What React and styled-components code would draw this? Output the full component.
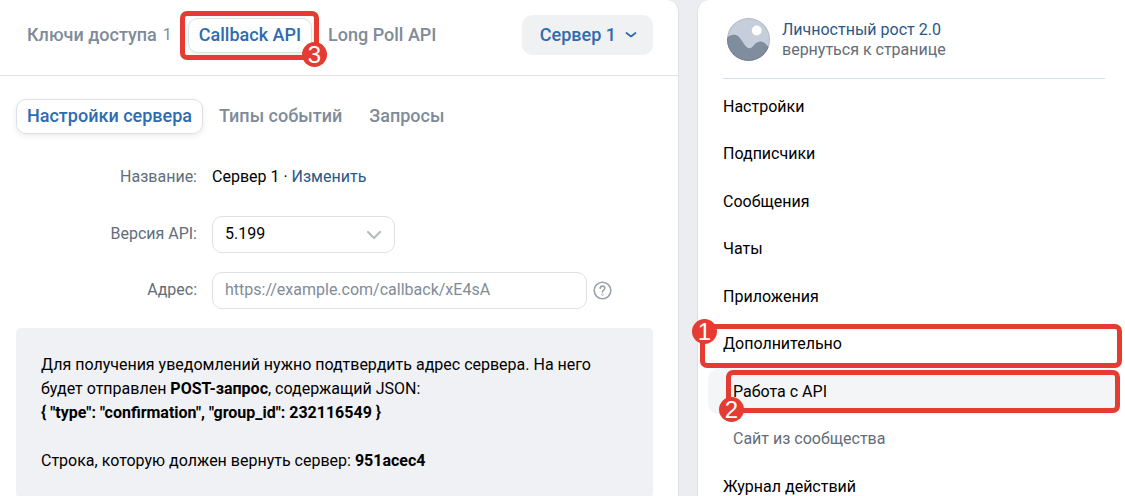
import React from 'react';
import styled, { createGlobalStyle } from 'styled-components';

const GlobalStyle = createGlobalStyle`
  * {
    box-sizing: border-box;
  }

  html {
    scrollbar-width: none;
  }

  body {
    margin: 0;
    background-color: #ebedf0;
    color: #000;
    font-family: Roboto, 'Liberation Sans', sans-serif;
    font-size: 16px;
    line-height: 20px;
  }

  button, input, select {
    font: inherit;
  }

  a {
    color: #2a5885;
    text-decoration: none;
  }
`;

// Two columns: the settings panel and the community menu
const Page = styled.div`
  display: grid;
  grid-template-columns: minmax(0, 1fr) 428px;
  gap: 18px;
  min-height: 100vh;
`;

const Panel = styled.main`
  background-color: #fff;
  border-right: 1px solid #dce1e6;
  border-top-right-radius: 12px;
`;

const PanelHeader = styled.header`
  display: flex;
  align-items: center;
  justify-content: space-between;
  padding: 15px 25px 20px 16px;
  border-bottom: 1px solid #dce1e6;
`;

const PanelBody = styled.div`
  padding: 23px 25px 0 16px;
`;

const Tabs = styled.nav`
  display: flex;
  align-items: center;
  gap: 5px;
`;

// Keeps the red highlight next to the element it surrounds
const Marked = styled.div`
  position: relative;
`;

const Tab = styled.button`
  display: flex;
  align-items: center;
  gap: 6px;
  height: 35px;
  padding: 0 10px 1px;
  border: 1px solid ${(props) => (props.$active ? '#dce1e6' : 'transparent')};
  border-radius: 10px;
  background-color: #fff;
  box-shadow: ${(props) => (props.$active ? '0 2px 6px rgba(0, 0, 0, 0.08)' : 'none')};
  color: ${(props) => (props.$active ? '#2f6bb0' : '#7f8b99')};
  font-size: 18px;
  font-weight: 500;
  white-space: nowrap;
  cursor: pointer;
`;

const Count = styled.span`
  font-size: 16px;
  font-weight: 400;
`;

const ServerButton = styled.button`
  display: flex;
  align-items: center;
  gap: 9px;
  height: 40px;
  padding: 0 16px 0 18px;
  border: 0;
  border-radius: 10px;
  background-color: #eff1f3;
  color: #2f6bb0;
  font-size: 18px;
  font-weight: 500;
  cursor: pointer;
`;

const Form = styled.form`
  display: grid;
  grid-template-columns: 181px minmax(0, 1fr);
  column-gap: 15px;
  row-gap: 19px;
  margin: 24px 0 19px;
`;

const Label = styled.label`
  align-self: center;
  padding-bottom: 2px;
  color: #626d7a;
  text-align: right;
`;

const Value = styled.div`
  padding: 9px 0 10px;
`;

const Field = styled.div`
  display: flex;
  align-items: center;
  gap: 6px;
`;

const SelectBox = styled.div`
  position: relative;
  width: 183px;
`;

const Select = styled.select`
  appearance: none;
  width: 100%;
  height: 37px;
  padding: 0 40px 2px 12px;
  border: 1px solid #dce1e6;
  border-radius: 10px;
  background-color: #fff;
  color: #000;
`;

const SelectArrow = styled.svg`
  position: absolute;
  top: 14px;
  right: 13px;
  pointer-events: none;
`;

const Input = styled.input`
  flex: 0 1 375px;
  min-width: 0;
  height: 37px;
  padding: 0 12px 2px;
  border: 1px solid #dce1e6;
  border-radius: 10px;

  &::placeholder {
    color: #818c99;
    opacity: 1;
  }
`;

const HelpButton = styled.button`
  display: flex;
  padding: 0;
  border: 0;
  background: none;
  cursor: pointer;
`;

const Info = styled.section`
  padding: 25px;
  border-radius: 5px;
  background-color: #f0f1f5;
  line-height: 24px;

  p {
    margin: 0;
  }

  p + p {
    margin-top: 24px;
  }
`;

const Sidebar = styled.aside`
  padding: 18px 5px 0 10px;
  border-left: 1px solid #dce1e6;
  border-top-left-radius: 12px;
  background-color: #fff;
`;

const Group = styled.a`
  display: flex;
  gap: 12px;
  margin: 0 15px 5px 15px;
  padding: 0 0 17px 4px;
  border-bottom: 1px solid #d7dfe6;
`;

const GroupText = styled.div`
  display: flex;
  flex-direction: column;
  padding-top: 2px;
`;

const Muted = styled.span`
  color: #626d7a;
`;

const Menu = styled.ul`
  margin: 0;
  padding: 0;
  list-style: none;
`;

const MenuItem = styled.li`
  position: relative;
  margin-bottom: 2px;

  &:nth-child(even) {
    margin-bottom: 3px;
  }
`;

const MenuLink = styled.a`
  display: block;
  padding: 0 15px 0 ${(props) => (props.$sub ? '25px' : '15px')};
  border-radius: 10px;
  background-color: ${(props) => (props.$active ? '#f4f5f7' : 'transparent')};
  color: ${(props) => (props.$sub && !props.$active ? '#626d7a' : '#000')};
  line-height: 45px;
`;

// Red frame drawn over the interface
const Frame = styled.div`
  position: absolute;
  inset: ${(props) => props.$inset};
  border: 5px solid #e63b32;
  border-radius: 7px;
  pointer-events: none;
`;

const badgeCorners = {
  topLeft: 'top: -10px; left: -13px;',
  bottomLeft: 'bottom: -14px; left: -12px;',
  bottomRight: 'bottom: -12px; right: -13px;',
};

const Badge = styled.span`
  position: absolute;
  ${(props) => badgeCorners[props.$corner]}
  width: 25px;
  height: 25px;
  border-radius: 50%;
  background-color: #e63b32;
  color: #fff;
  font-family: 'Liberation Sans', Arial, sans-serif;
  font-size: 24px;
  line-height: 25px;
  text-align: center;
`;

const Highlight = ({ inset, corner, number }) => (
  <Frame $inset={inset}>
    <Badge $corner={corner}>{number}</Badge>
  </Frame>
);

const Avatar = () => (
  <svg width="43" height="43" viewBox="0 0 43 43" aria-hidden="true">
    <defs>
      <clipPath id="avatarClip">
        <circle cx="21.5" cy="21.5" r="21.5" />
      </clipPath>
    </defs>
    <g clipPath="url(#avatarClip)">
      <rect width="43" height="43" fill="#c5ceda" />
      <circle cx="29.7" cy="12.5" r="4.9" fill="#fff" />
      <path
        d="M0 20C2 17.200 5 16.500 7.500 16.700C11.500 17 13.500 20.500 16 24.500C18.500 28.500 20.500 30.300 22.800 30.300C26 30.300 27.500 24 33 23.500C36.500 23.300 39 25.500 41 28.500L43 31V43H0Z"
        fill="#7f8d9f"
      />
    </g>
    <circle cx="21.5" cy="21.5" r="21" fill="none" stroke="#000" strokeOpacity="0.1" />
  </svg>
);

const menu = [
  { label: 'Настройки' },
  { label: 'Подписчики' },
  { label: 'Сообщения' },
  { label: 'Чаты' },
  { label: 'Приложения' },
  { label: 'Дополнительно', mark: { inset: '3px -2px -2px -8px', corner: 'topLeft', number: 1 } },
  { label: 'Работа с API', sub: true, active: true, mark: { inset: '1px 0 1px 18px', corner: 'bottomLeft', number: 2 } },
  { label: 'Сайт из сообщества', sub: true },
  { label: 'Журнал действий' },
];

const App = () => (
  <>
    <GlobalStyle />
    <Page>
      <Panel>
        <PanelHeader>
          <Tabs>
            <Tab type="button">
              Ключи доступа <Count>1</Count>
            </Tab>
            <Marked>
              <Tab type="button" $active>Callback API</Tab>
              <Highlight inset="-7px -7px -7px -8px" corner="bottomRight" number={3} />
            </Marked>
            <Tab type="button">Long Poll API</Tab>
          </Tabs>
          <ServerButton type="button">
            Сервер 1
            <svg width="12" height="8" viewBox="0 0 12 8" fill="none" aria-hidden="true">
              <path d="M1.500 2L6 5.500L10.500 2" stroke="currentColor" strokeWidth="1.700" strokeLinecap="round" strokeLinejoin="round" />
            </svg>
          </ServerButton>
        </PanelHeader>

        <PanelBody>
          <Tabs>
            <Tab type="button" $active>Настройки сервера</Tab>
            <Tab type="button">Типы событий</Tab>
            <Tab type="button">Запросы</Tab>
          </Tabs>

          <Form>
            <Label as="span">Название:</Label>
            <Value>
              Сервер 1 · <a href="#edit">Изменить</a>
            </Value>

            <Label htmlFor="version">Версия API:</Label>
            <Field>
              <SelectBox>
                <Select id="version" defaultValue="5.199">
                  <option>5.199</option>
                </Select>
                <SelectArrow width="16" height="10" viewBox="0 0 16 10" fill="none">
                  <path d="M2 2L8 8L14 2" stroke="#b8bcc2" strokeWidth="2.200" strokeLinecap="round" strokeLinejoin="round" />
                </SelectArrow>
              </SelectBox>
            </Field>

            <Label htmlFor="address">Адрес:</Label>
            <Field>
              <Input id="address" type="text" placeholder="https://example.com/callback/xE4sA" />
              <HelpButton type="button" aria-label="Помощь">
                <svg width="19" height="19" viewBox="0 0 19 19" fill="none" stroke="#99a2ad" strokeWidth="1.600" strokeLinecap="round">
                  <circle cx="9.500" cy="9.500" r="8.300" />
                  <path d="M7.200 7.400C7.200 6 8.200 5.100 9.500 5.100S11.800 6 11.800 7.200C11.800 8.900 9.500 9 9.500 10.900" />
                  <circle cx="9.500" cy="13.600" r="0.300" />
                </svg>
              </HelpButton>
            </Field>
          </Form>

          <Info>
            <p>
              Для получения уведомлений нужно подтвердить адрес сервера. На него
              будет отправлен <b>POST-запрос</b>, содержащий JSON:
              <br />
              <b>{'{ "type": "confirmation", "group_id": 232116549 }'}</b>
            </p>
            <p>
              Строка, которую должен вернуть сервер: <b>951acec4</b>
            </p>
          </Info>
        </PanelBody>
      </Panel>

      <Sidebar>
        <Group href="#group">
          <Avatar />
          <GroupText>
            Личностный рост 2.0
            <Muted>вернуться к странице</Muted>
          </GroupText>
        </Group>
        <Menu>
          {menu.map((item) => (
            <MenuItem key={item.label}>
              <MenuLink href="#menu" $sub={item.sub} $active={item.active}>
                {item.label}
              </MenuLink>
              {item.mark && <Highlight {...item.mark} />}
            </MenuItem>
          ))}
        </Menu>
      </Sidebar>
    </Page>
  </>
);

export default App;
